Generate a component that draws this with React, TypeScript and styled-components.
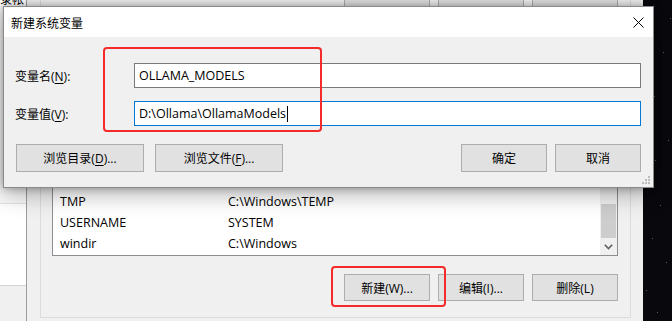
import styled, { createGlobalStyle } from "styled-components";

const GlobalStyle = createGlobalStyle`
  html, body {
    margin: 0;
    padding: 0;
  }
  body {
    width: 672px;
    height: 321px;
    overflow: hidden;
    background: #f0f0f0;
    font-family: "Open Sans", "Noto Sans CJK SC", sans-serif;
    font-size: 12px;
    color: #000;
  }
`;

type Row = { name: string; value: string };

const systemVars: Row[] = [
  { name: "OS", value: "Windows_NT" },
  { name: "Path", value: "C:\\Windows\\system32;C:\\Windows;" },
  { name: "PATHEXT", value: ".COM;.EXE;.BAT;.CMD;.VBS" },
  { name: "PROCESSOR_ARCHITECTURE", value: "AMD64" },
  { name: "TEMP", value: "C:\\Windows\\TEMP" },
  { name: "TMP", value: "C:\\Windows\\TEMP" },
  { name: "USERNAME", value: "SYSTEM" },
  { name: "windir", value: "C:\\Windows" },
];

const stars = [
  [4, 30], [20, 52], [11, 96], [25, 140], [6, 176], [17, 205],
  [9, 238], [23, 262], [3, 290], [14, 312], [27, 18], [12, 160],
];

function CloseIcon() {
  return (
    <svg width="11" height="11" viewBox="0 0 11 11">
      <path d="M0.5 0.5 L10.5 10.5 M10.5 0.5 L0.5 10.5" stroke="#000" strokeWidth="1" fill="none" />
    </svg>
  );
}

function Grip() {
  return (
    <svg width="9" height="9" viewBox="0 0 9 9">
      {[
        [6, 0], [3, 3], [6, 3], [0, 6], [3, 6], [6, 6],
      ].map(([x, y], i) => (
        <rect key={i} x={x} y={y} width="2" height="2" fill="#bcbcbc" />
      ))}
    </svg>
  );
}

function Chevron() {
  return (
    <svg width="9" height="6" viewBox="0 0 9 6">
      <path d="M0.8 0.8 L4.5 4.6 L8.2 0.8" stroke="#606060" strokeWidth="1.6" fill="none" />
    </svg>
  );
}

export default function App() {
  return (
    <>
      <GlobalStyle />
      <Screen>
        <BackWindow>
          <SidePane>
            <SideCaption>录帐</SideCaption>
            <SideFill />
            <SidePanel />
            <SideFoot />
          </SidePane>
          <SideDivider />
          <MainPane>
            {/* user-variable buttons: only their lower edges peek out above the dialog */}
            <UpperGroup>
              <ActionRow>
                <PlainButton />
                <PlainButton />
                <PlainButton />
              </ActionRow>
            </UpperGroup>
            <LowerGroup>
              <ListBox>
                <ListRows>
                  {systemVars.map((row) => (
                    <ListRow key={row.name}>
                      <NameCell>{row.name}</NameCell>
                      <span>{row.value}</span>
                    </ListRow>
                  ))}
                </ListRows>
                <ScrollBar>
                  <ScrollThumb />
                  <ScrollArrow>
                    <Chevron />
                  </ScrollArrow>
                </ScrollBar>
              </ListBox>
              <ActionRow $top={18}>
                <PlainButton>新建(W)...</PlainButton>
                <PlainButton>编辑(I)...</PlainButton>
                <PlainButton>删除(L)</PlainButton>
              </ActionRow>
            </LowerGroup>
          </MainPane>
        </BackWindow>
        <Desktop>
          <svg width="29" height="321">
            {stars.map(([x, y], i) => (
              <rect key={i} x={x} y={y} width="1" height="1" fill="#5a5a66" />
            ))}
          </svg>
        </Desktop>

        <Dialog>
          <TitleBar>
            <Title>新建系统变量</Title>
            <CloseBox>
              <CloseIcon />
            </CloseBox>
          </TitleBar>
          <DialogBody>
            <FormGrid>
              <Label>
                变量名(<u>N</u>):
              </Label>
              <TextField>OLLAMA_MODELS</TextField>
              <Label>
                变量值(<u>V</u>):
              </Label>
              <TextField $focused>
                D:\Ollama\OllamaModels
                <Caret />
              </TextField>
            </FormGrid>
            <DialogButtons>
              <ButtonGroup>
                <DialogButton $width={128}>
                  浏览目录(<u>D</u>)...
                </DialogButton>
                <DialogButton $width={128}>
                  浏览文件(<u>F</u>)...
                </DialogButton>
              </ButtonGroup>
              <ButtonGroup>
                <DialogButton $width={86}>确定</DialogButton>
                <DialogButton $width={86}>取消</DialogButton>
              </ButtonGroup>
            </DialogButtons>
            <GripCorner>
              <Grip />
            </GripCorner>
          </DialogBody>
        </Dialog>

        <Highlight $x={103} $y={47} $w={219} $h={85} />
        <Highlight $x={331} $y={266} $w={115} $h={41} />
      </Screen>
    </>
  );
}

const Screen = styled.div`
  position: relative;
  display: flex;
  width: 672px;
  height: 321px;
  overflow: hidden;
`;

const BackWindow = styled.div`
  display: grid;
  grid-template-columns: 26px 1px 1fr;
  width: 643px;
  height: 321px;
  background: #f0f0f0;
`;

const SidePane = styled.div`
  display: flex;
  flex-direction: column;
  overflow: hidden;
`;

const SideCaption = styled.div`
  height: 12px;
  margin-top: -6px;
  line-height: 12px;
  font-size: 12px;
  color: #000;
  white-space: nowrap;
  background: #fff;
`;

const SideFill = styled.div`
  flex: 1;
  background: #f9f9f9;
`;

const SidePanel = styled.div`
  height: 81px;
  background: #fff;
  border-top: 1px solid #e3e3e3;
  border-bottom: 1px solid #d4d4d4;
`;

const SideFoot = styled.div`
  height: 35px;
  background: #f0f0f0;
`;

const SideDivider = styled.div`
  background: #9c9c9c;
`;

const MainPane = styled.div`
  display: flex;
  flex-direction: column;
  padding: 0 12px 3px 13px;
`;

const UpperGroup = styled.div`
  margin-top: -20px;
  padding: 0 12px 14px 11px;
  border: 1px solid #dcdcdc;
  border-top: none;
`;

const LowerGroup = styled.div`
  flex: 1;
  display: flex;
  flex-direction: column;
  margin-top: 8px;
  padding: 22px 12px 16px 11px;
  border: 1px solid #dcdcdc;
`;

const ListBox = styled.div`
  flex: 1;
  display: flex;
  min-height: 0;
  overflow: hidden;
  background: #fff;
  border: 1px solid #8c8e94;
`;

const ListRows = styled.div`
  flex: 1;
  display: flex;
  flex-direction: column;
  justify-content: flex-end;
  padding-bottom: 1px;
`;

const ListRow = styled.div`
  display: flex;
  align-items: center;
  height: 21px;
  padding-left: 7px;
  white-space: nowrap;
  font-size: 12.5px;
`;

const NameCell = styled.span`
  width: 168px;
`;

const ScrollBar = styled.div`
  width: 17px;
  display: flex;
  flex-direction: column;
  justify-content: flex-end;
  background: #f0f0f0;
`;

const ScrollThumb = styled.div`
  height: 34px;
  margin: 0 1px;
  background: #cdcdcd;
`;

const ScrollArrow = styled.div`
  height: 17px;
  display: flex;
  align-items: center;
  justify-content: center;
`;

const ActionRow = styled.div<{ $top?: number }>`
  display: flex;
  justify-content: flex-end;
  gap: 8px;
  margin-top: ${(p) => p.$top ?? 0}px;
`;

const PlainButton = styled.div`
  box-sizing: border-box;
  width: 86px;
  height: 27px;
  display: flex;
  align-items: center;
  justify-content: center;
  background: #e1e1e1;
  border: 1px solid #adadad;
  font-size: 12px;
  white-space: nowrap;
`;

const Desktop = styled.div`
  width: 29px;
  height: 321px;
  background: #08080d;
`;

const Dialog = styled.div`
  position: absolute;
  left: 3px;
  top: 6px;
  box-sizing: border-box;
  width: 651px;
  height: 182px;
  display: flex;
  flex-direction: column;
  border: 1px solid #8a8a8a;
  background: #f0f0f0;
  box-shadow: 0 6px 22px rgba(0, 0, 0, 0.3), 0 0 8px rgba(0, 0, 0, 0.3);
`;

const TitleBar = styled.div`
  height: 30px;
  display: flex;
  align-items: center;
  justify-content: space-between;
  background: #fff;
  padding-left: 7px;
`;

const Title = styled.div`
  font-size: 12px;
  font-family: "Noto Sans CJK SC", sans-serif;
`;

const CloseBox = styled.div`
  width: 30px;
  height: 30px;
  display: flex;
  align-items: center;
  justify-content: center;
`;

const DialogBody = styled.div`
  position: relative;
  flex: 1;
  display: flex;
  flex-direction: column;
  padding: 26px 12px 0 11px;
`;

const FormGrid = styled.div`
  display: grid;
  grid-template-columns: 119px 1fr;
  row-gap: 13px;
  align-items: center;
`;

const Label = styled.div`
  font-size: 12px;
  white-space: nowrap;
  u {
    text-underline-offset: 2px;
  }
`;

const TextField = styled.div<{ $focused?: boolean }>`
  box-sizing: border-box;
  height: 25px;
  display: flex;
  align-items: center;
  padding-left: 4px;
  background: #fff;
  border: 1px solid ${(p) => (p.$focused ? "#0078d7" : "#7a7a7a")};
  font-size: 12.5px;
  white-space: nowrap;
`;

const Caret = styled.span`
  display: inline-block;
  width: 1px;
  height: 16px;
  margin-left: 1px;
  background: #000;
`;

const DialogButtons = styled.div`
  display: flex;
  justify-content: space-between;
  margin-top: 18px;
  padding-left: 1px;
`;

const ButtonGroup = styled.div`
  display: flex;
  gap: 8px;
  &:first-child {
    gap: 11px;
  }
`;

const DialogButton = styled.div<{ $width: number }>`
  box-sizing: border-box;
  width: ${(p) => p.$width}px;
  height: 28px;
  display: flex;
  align-items: center;
  justify-content: center;
  background: #e1e1e1;
  border: 1px solid #adadad;
  font-size: 12px;
  white-space: nowrap;
  u {
    text-underline-offset: 2px;
  }
`;

const GripCorner = styled.div`
  position: absolute;
  right: 2px;
  bottom: 2px;
  line-height: 0;
`;

const Highlight = styled.div<{ $x: number; $y: number; $w: number; $h: number }>`
  position: absolute;
  left: ${(p) => p.$x}px;
  top: ${(p) => p.$y}px;
  width: ${(p) => p.$w}px;
  height: ${(p) => p.$h}px;
  box-sizing: border-box;
  border: 2px solid #f52a2a;
  border-radius: 4px;
  pointer-events: none;
`;
